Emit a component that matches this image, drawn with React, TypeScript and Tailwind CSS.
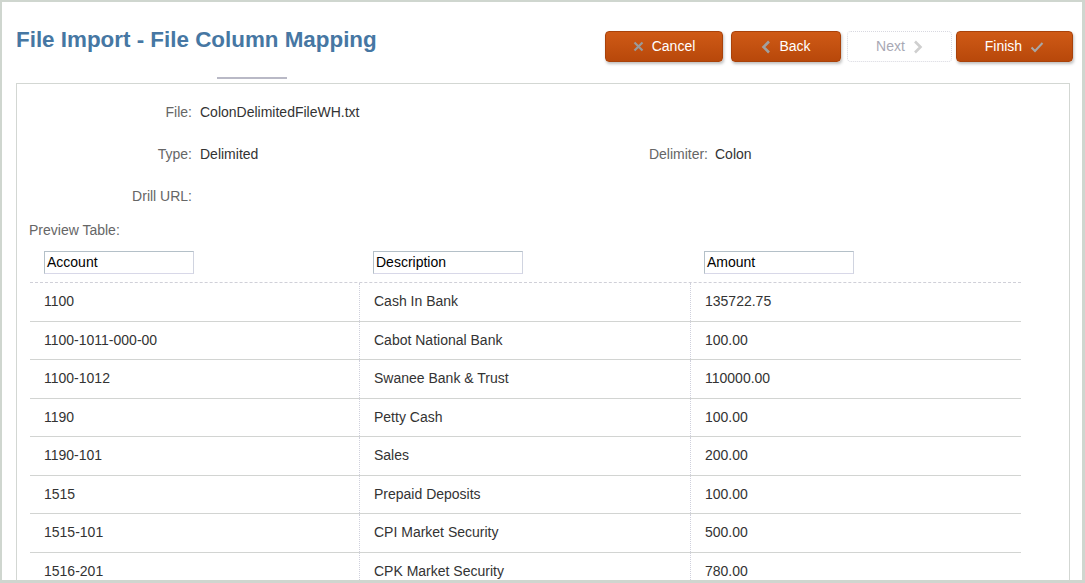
const rows = [
  ["1100", "Cash In Bank", "135722.75"],
  ["1100-1011-000-00", "Cabot National Bank", "100.00"],
  ["1100-1012", "Swanee Bank & Trust", "110000.00"],
  ["1190", "Petty Cash", "100.00"],
  ["1190-101", "Sales", "200.00"],
  ["1515", "Prepaid Deposits", "100.00"],
  ["1515-101", "CPI Market Security", "500.00"],
  ["1516-201", "CPK Market Security", "780.00"],
];

function XIcon() {
  return (
    <svg width="11" height="11" viewBox="0 0 11 11" className="mr-2">
      <path d="M1.5 1.5 L9.5 9.5 M9.5 1.5 L1.5 9.5" stroke="#9a9a9a" strokeWidth="2.2" fill="none" />
    </svg>
  );
}

function Chevron({ dir, color }: { dir: "left" | "right"; color: string }) {
  return (
    <svg width="10" height="14" viewBox="0 0 10 14" className={dir === "left" ? "mr-2" : "ml-2"}>
      <path
        d={dir === "left" ? "M8 1.5 L2.5 7 L8 12.5" : "M2 1.5 L7.5 7 L2 12.5"}
        stroke={color}
        strokeWidth="2.6"
        fill="none"
      />
    </svg>
  );
}

function Check() {
  return (
    <svg width="14" height="12" viewBox="0 0 14 12" className="ml-2">
      <path d="M1.5 6.5 L5 10 L12.5 2" stroke="#a8a8a8" strokeWidth="2" fill="none" />
    </svg>
  );
}

const orangeBtn =
  "flex items-center justify-center h-[31px] rounded-[4px] border border-[#a9420a] bg-gradient-to-b from-[#cf5a16] to-[#b8480a] text-white text-[14px] shadow-[1px_2px_3px_rgba(0,0,0,0.25)]";

export default function App() {
  return (
    <div className="w-[1085px] h-[583px] overflow-hidden bg-white border-l-2 border-r-[3px] border-t-2 border-b-[3px] border-[#cfd6cf] font-['Liberation_Sans',Arial,sans-serif] flex flex-col">
      <div className="flex items-start pl-[14px] pr-[9px]">
        <div className="flex flex-col">
          <h1 className="mt-[25px] text-[22.4px] leading-[26px] font-bold text-[#4677a3]">
            File Import - File Column Mapping
          </h1>
          <div className="ml-[201px] mt-[24px] w-[70px] h-[2px] bg-[#b9b9c6]" />
        </div>
        <div className="ml-auto mt-[29px] flex">
          <button className={`${orangeBtn} w-[118px]`}>
            <XIcon />
            Cancel
          </button>
          <button className={`${orangeBtn} w-[110px] ml-[8px]`}>
            <Chevron dir="left" color="#a0a0a0" />
            Back
          </button>
          <button className="flex items-center justify-center h-[31px] w-[105px] ml-[6px] rounded-[4px] border border-dotted border-[#d8d8e0] bg-white text-[#a8a8b4] text-[14px]">
            Next
            <Chevron dir="right" color="#cfcfcf" />
          </button>
          <button className={`${orangeBtn} w-[117px] ml-[4px]`}>
            Finish
            <Check />
          </button>
        </div>
      </div>

      <div className="mt-[4px] ml-[14px] mr-[12px] flex-1 border border-[#d3d7d3] border-b-0 text-[14px]">
        <div className="grid grid-cols-[175px_330px_186px_1fr] gap-y-[24px] pt-[19px] text-[#333]">
          <div className="text-right text-[#666] h-[18px] leading-[18px]">File:</div>
          <div className="pl-[8px] h-[18px] leading-[18px]">ColonDelimitedFileWH.txt</div>
          <div />
          <div />
          <div className="text-right text-[#666] h-[18px] leading-[18px]">Type:</div>
          <div className="pl-[8px] h-[18px] leading-[18px]">Delimited</div>
          <div className="text-right text-[#666] h-[18px] leading-[18px]">Delimiter:</div>
          <div className="pl-[7px] h-[18px] leading-[18px]">Colon</div>
          <div className="text-right text-[#666] h-[18px] leading-[18px]">Drill URL:</div>
          <div />
          <div />
          <div />
        </div>

        <div className="mt-[16px] ml-[12px] text-[#666] leading-[18px]">Preview Table:</div>

        <div className="ml-[13px] w-[991px] mt-[12px]">
          <div className="grid grid-cols-[329px_331px_331px] h-[31px] items-start">
            {["Account", "Description", "Amount"].map((h) => (
              <div key={h} className="pl-[14px]">
                <div className="w-[150px] h-[23px] border border-[#b4c0c8] border-r-[#d0d4e0] border-b-[#d8d8e8] px-[2px] leading-[21px] text-black">
                  {h}
                </div>
              </div>
            ))}
          </div>
          {rows.map((r, i) => (
            <div
              key={i}
              className={`grid grid-cols-[329px_331px_331px] h-[38.5px] border-t ${i === 0 ? "border-dashed border-[#d0d0d8]" : "border-[#d2d4d2]"}`}
            >
              {r.map((c, j) => (
                <div
                  key={j}
                  className={`flex items-center pl-[14px] text-[#333] ${j > 0 ? "border-l border-dotted border-[#cfd0dc]" : ""}`}
                >
                  {c}
                </div>
              ))}
            </div>
          ))}
        </div>
      </div>
    </div>
  );
}
